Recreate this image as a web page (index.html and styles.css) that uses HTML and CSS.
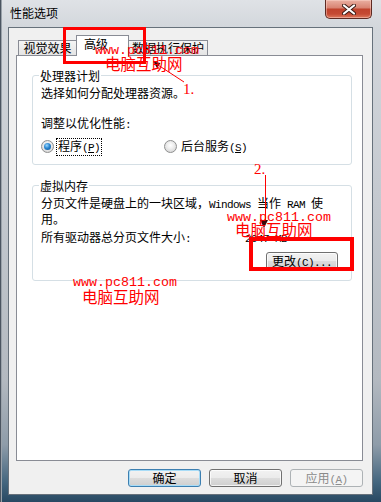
FILE: index.html
```html
<!DOCTYPE html>
<html lang="zh-CN">
<head>
<meta charset="utf-8">
<title>性能选项</title>
<link rel="stylesheet" href="styles.css">
</head>
<body>
<div class="window">
  <div class="titlebar">
    <span class="title">性能选项</span>
    <div class="close">
      <svg width="14" height="11" viewBox="0 0 14 11">
        <path d="M2 1.5 L12 9.5 M12 1.5 L2 9.5" stroke="#3a1a14" stroke-width="4" stroke-linecap="round"/>
        <path d="M2 1.5 L12 9.5 M12 1.5 L2 9.5" stroke="#ffffff" stroke-width="2.2" stroke-linecap="round"/>
      </svg>
    </div>
  </div>
  <div class="client">
    <div class="tabs">
      <div class="tab t1">视觉效果</div>
      <div class="tab sel">高级</div>
      <div class="tab t3">数据执行保护</div>
    </div>
    <div class="panel">
      <fieldset class="group g1">
        <legend>处理器计划</legend>
        <p class="l1">选择如何分配处理器资源。</p>
        <p class="l2">调整以优化性能<span class="en">:</span></p>
        <div class="radios">
          <div class="opt o1"><span class="radio on"></span><span class="focus">程序<span class="en">(<u>P</u>)</span></span></div>
          <div class="opt"><span class="radio"></span><span class="lbl">后台服务<span class="en">(<u>S</u>)</span></span></div>
        </div>
      </fieldset>
      <fieldset class="group g2">
        <legend>虚拟内存</legend>
        <p class="para">分页文件是硬盘上的一块区域，<span class="en">Windows </span>当作<span class="en"> RAM </span>使<br>用。</p>
        <div class="size"><span>所有驱动器总分页文件大小<span class="en">:</span></span><span class="val en">2047 MB</span></div>
        <div class="brow"><button class="btn change">更改<span class="en">(<u>C</u>)...</span></button></div>
      </fieldset>
    </div>
    <div class="buttons">
      <button class="btn def">确定</button>
      <button class="btn">取消</button>
      <button class="btn dis">应用<span class="en">(<u>A</u>)</span></button>
    </div>
  </div>
  <div class="annot">
    <svg class="marks" width="381" height="502" viewBox="0 0 381 502">
      <rect x="64.5" y="28.5" width="80" height="34" fill="none" stroke="#ff0000" stroke-width="3"/>
      <rect x="251" y="239" width="101" height="30" fill="none" stroke="#ff0000" stroke-width="4"/>
      <line x1="184" y1="82" x2="158" y2="65" stroke="#ff0000" stroke-width="1"/>
      <polygon points="153,61.5 160.5,62.9 157.1,67.9" fill="#3a0a0a"/>
      <line x1="265.5" y1="175" x2="265.5" y2="221" stroke="#ff0000" stroke-width="1"/>
      <polygon points="264,228 260,220 268,220" fill="#3a0a0a"/>
    </svg>
    <span class="wm-url u1">www.pc811.com</span>
    <span class="wm-cn c1">电脑互助网</span>
    <span class="wm-url u2">www.pc811.com</span>
    <span class="wm-cn c2">电脑互助网</span>
    <span class="wm-url u3">www.pc811.com</span>
    <span class="wm-cn c3">电脑互助网</span>
    <span class="num n1">1.</span>
    <span class="num n2">2.</span>
  </div>
</div>
</body>
</html>
```
FILE: styles.css
```css
* { box-sizing: border-box; }
html, body { margin: 0; padding: 0; }
body {
  width: 381px;
  height: 502px;
  overflow: hidden;
  font-family: "Noto Sans CJK SC", "Microsoft YaHei", sans-serif;
  font-size: 12px;
  color: #000;
  background: #284862;
}
.en {
  font-family: "Liberation Mono", monospace;
  font-size: 11px;
  letter-spacing: -0.6px;
}
.window {
  position: relative;
  width: 381px;
  height: 502px;
  display: flex;
  flex-direction: column;
  background: linear-gradient(180deg, #dfe2e6 0px, #d3d7dc 27px, #c4c9cf 200px, #b3b9c0 380px, #8e9ca9 445px, #44667f 482px, #284862 502px);
  box-shadow: inset 1px 0 0 #4b5561, inset 2px 0 0 #9aa2aa;
}
.titlebar {
  height: 27px;
  flex: none;
  display: flex;
  justify-content: space-between;
  align-items: flex-start;
  padding-left: 10px;
}
.title {
  margin-top: 6px;
  line-height: 14px;
}
.close {
  width: 47px;
  height: 19px;
  margin-right: 9px;
  border: 1px solid #5e2a22;
  border-top: none;
  border-radius: 0 0 5px 5px;
  background: linear-gradient(180deg, #eab0a2 0%, #d98574 42%, #c0432d 52%, #c54a33 78%, #de7a5e 100%);
  box-shadow: inset 0 0 0 1px rgba(255, 220, 210, 0.45);
  display: flex;
  align-items: center;
  justify-content: center;
}
.client {
  flex: 1;
  margin: 0 8px 7px 8px;
  border: 1px solid #67717b;
  background: #f0f0f0;
  display: flex;
  flex-direction: column;
  padding: 7px 9px 7px 7px;
}
.tabs {
  height: 20px;
  flex: none;
  display: flex;
  align-items: flex-end;
  margin-left: 2px;
  position: relative;
  z-index: 1;
}
.tab {
  border: 1px solid #898c95;
  border-bottom: none;
  height: 15px;
  line-height: 14px;
  text-align: center;
  white-space: nowrap;
  background: linear-gradient(180deg, #f5f5f5, #e4e4e4);
}
.t1 { width: 59px; }
.sel {
  width: 53px;
  height: 21px;
  margin-left: -1px;
  margin-bottom: -1px;
  padding: 0 0 4px 7px;
  line-height: 16px;
  text-align: left;
  background: #fff;
  position: relative;
  z-index: 2;
}
.t3 { width: 80px; margin-left: -1px; }
.panel {
  flex: 1;
  background: #fff;
  border: 1px solid #898c95;
  padding-top: 13px;
}
.group {
  margin: 0 10px 0 15px;
  padding: 0 8px 10px 8px;
  border: 1px solid #d5dfe5;
  border-radius: 3px;
  min-width: 0;
}
.group legend {
  padding: 0 1px;
  margin-left: -2px;
  line-height: 13px;
  font-size: 12px;
}
.g2 { margin-top: 14px; }
.l1 { margin: 4px 0 0; line-height: 14px; }
.l2 { margin: 16px 0 0; line-height: 14px; }
.radios {
  margin-top: 7px;
  height: 15px;
  display: flex;
  align-items: center;
}
.opt { display: flex; align-items: center; }
.o1 { width: 123px; }
.radio {
  width: 13px;
  height: 13px;
  flex: none;
  border-radius: 50%;
  border: 1px solid #8e8f8f;
  background: radial-gradient(circle at 50% 40%, #ffffff 0%, #f0f0f0 35%, #cdcdcd 100%);
  margin-right: 2px;
  display: flex;
  align-items: center;
  justify-content: center;
}
.radio.on::after {
  content: "";
  width: 7px;
  height: 7px;
  border-radius: 50%;
  background: radial-gradient(circle at 40% 35%, #9ad8ff 0%, #2a86d0 45%, #0d4f8f 100%);
}
.focus {
  border: 1px dotted #000;
  padding: 0 1px;
  line-height: 13px;
}
.lbl { padding-left: 2px; line-height: 13px; }
.para { margin: 4px 0 0; line-height: 13px; white-space: nowrap; }
.size { margin-top: 5px; line-height: 13px; display: flex; align-items: baseline; white-space: nowrap; }
.val { margin-left: 54px; }
.brow {
  margin-top: 6px;
  display: flex;
  justify-content: flex-end;
  padding-right: 5px;
}
.btn {
  width: 73px;
  height: 18px;
  padding: 0;
  border: 1px solid #707070;
  border-radius: 3px;
  background: linear-gradient(180deg, #f2f2f2 0%, #ebebeb 49%, #dddddd 50%, #cfcfcf 100%);
  box-shadow: inset 0 0 0 1px rgba(255, 255, 255, 0.75);
  font-family: inherit;
  font-size: 12px;
  line-height: 16px;
  color: #000;
  white-space: nowrap;
}
.change { width: 72px; }
.buttons {
  flex: none;
  margin-top: 8px;
  display: flex;
  justify-content: flex-end;
  gap: 8px;
}
.def {
  border-color: #3c7fb1;
  box-shadow: inset 0 0 0 1px #a8dcf7;
}
.dis {
  border-color: #adb2b5;
  background: #f4f4f4;
  color: #8b8b8b;
  box-shadow: none;
}
.annot {
  position: absolute;
  left: 0;
  top: 0;
  width: 381px;
  height: 502px;
  pointer-events: none;
  z-index: 10;
}
.marks { position: absolute; left: 0; top: 0; }
.wm-url {
  position: absolute;
  font-family: "Liberation Mono", monospace;
  font-size: 13.33px;
  line-height: 14px;
  color: #ff0000;
  white-space: nowrap;
}
.wm-cn {
  position: absolute;
  font-family: "Noto Sans CJK SC", sans-serif;
  font-size: 15.5px;
  line-height: 16px;
  color: #ff0000;
  white-space: nowrap;
}
.num {
  position: absolute;
  font-family: "Liberation Serif", serif;
  font-size: 15px;
  line-height: 14px;
  color: #ff0000;
}
.u1 { left: 95px; top: 44px; }
.c1 { left: 105px; top: 55px; }
.u2 { left: 227px; top: 211px; }
.c2 { left: 235px; top: 221px; }
.u3 { left: 73px; top: 276px; }
.c3 { left: 82px; top: 288px; }
.n1 { left: 183px; top: 82px; }
.n2 { left: 254px; top: 162px; }
```
